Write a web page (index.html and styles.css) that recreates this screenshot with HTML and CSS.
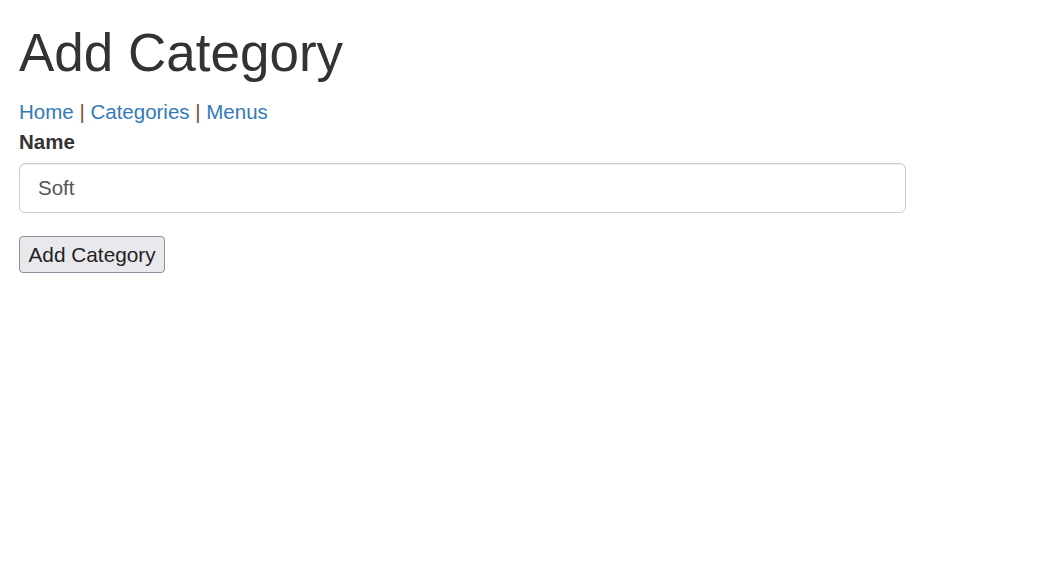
FILE: index.html
```html
<!DOCTYPE html>
<html>
<head>
<meta charset="utf-8">
<title>Add Category</title>
<link rel="stylesheet" href="styles.css">
</head>
<body>
<div class="page">
  <h1 class="title">Add Category</h1>
  <nav class="nav">
    <a href="#" class="nav-link">Home</a> <span class="sep">|</span> <a href="#" class="nav-link">Categories</a> <span class="sep">|</span> <a href="#" class="nav-link">Menus</a>
  </nav>
  <form class="form">
    <div class="form-group">
      <label class="label" for="name">Name</label>
      <input class="input" id="name" type="text" value="Soft">
    </div>
    <button class="btn" type="button">Add Category</button>
  </form>
</div>
</body>
</html>
```

FILE: styles.css
```css
html, body {
  margin: 0;
  padding: 0;
  background: #fff;
}
body {
  font-family: "Liberation Sans", Arial, sans-serif;
  font-size: 20.5px;
  line-height: 29.5px;
  color: #333;
}
.page {
  padding: 0 19px;
}
.title {
  margin: 23px 0 15px;
  font-size: 53px;
  font-weight: 500;
  line-height: 59px;
  color: #333;
}
.nav {
  display: block;
}
.nav-link {
  color: #337ab7;
  text-decoration: none;
}
.sep {
  color: #7a4f2c;
}
.form {
  margin: 0;
}
.form-group {
  margin-bottom: 23px;
}
.label {
  display: block;
  font-weight: 700;
  margin-bottom: 7px;
}
.input {
  display: block;
  box-sizing: border-box;
  width: 887px;
  height: 50px;
  padding: 9px 18px;
  border: 1px solid #ccc;
  border-radius: 6px;
  box-shadow: inset 0 1px 1px rgba(0,0,0,.075);
  font-family: "Liberation Sans", Arial, sans-serif;
  font-size: 20.5px;
  color: #555;
  background: #fff;
  outline: none;
}
.btn {
  box-sizing: border-box;
  height: 37px;
  padding: 0 8.5px;
  border: 1px solid #8f8f9d;
  border-radius: 4px;
  background: #e9e9ed;
  font-family: "Liberation Sans", Arial, sans-serif;
  font-size: 20.8px;
  color: #222;
  line-height: 24px;
}
```
